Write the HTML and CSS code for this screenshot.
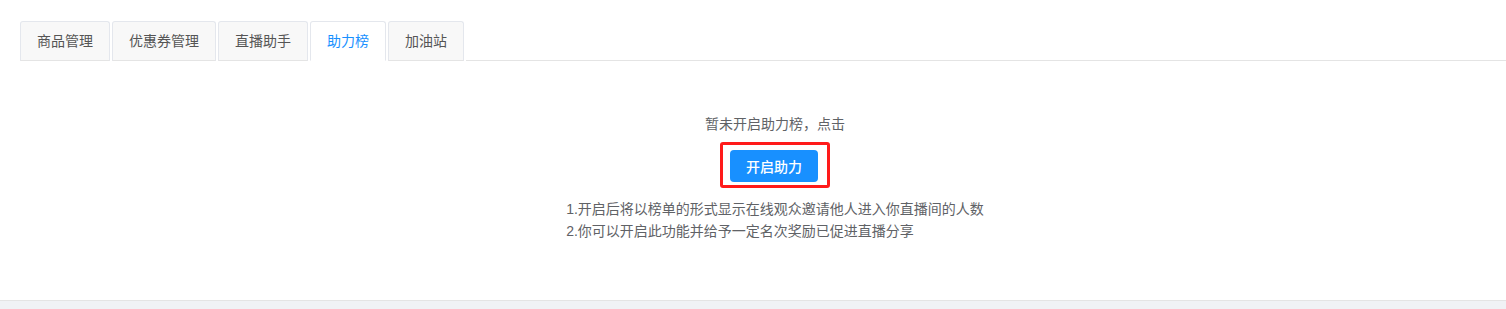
FILE: index.html
```html
<!DOCTYPE html>
<html lang="zh-CN">
<head>
<meta charset="utf-8">
<title>助力榜</title>
<link rel="stylesheet" href="styles.css">
</head>
<body>
<div class="panel">
  <div class="tabs">
    <div class="tab">商品管理</div>
    <div class="tab">优惠券管理</div>
    <div class="tab">直播助手</div>
    <div class="tab active">助力榜</div>
    <div class="tab">加油站</div>
    <div class="tab-fill"></div>
  </div>
  <div class="content">
    <p class="tip">暂未开启助力榜，点击</p>
    <div class="highlight">
      <button class="btn-primary" type="button">开启助力</button>
    </div>
    <div class="notes">
      <p>1.开启后将以榜单的形式显示在线观众邀请他人进入你直播间的人数</p>
      <p>2.你可以开启此功能并给予一定名次奖励已促进直播分享</p>
    </div>
  </div>
</div>
</body>
</html>
```

FILE: styles.css
```css
* { box-sizing: border-box; }
html, body { margin: 0; padding: 0; }
body {
  background: #f0f2f5;
  font-family: "Liberation Sans", "Noto Sans CJK SC", sans-serif;
  font-size: 14px;
  color: #606266;
}
.panel {
  background: #fff;
  height: 301px;
  border-bottom: 1px solid #e4e4e4;
  padding: 21px 0 0 20px;
}
.tabs {
  display: flex;
  align-items: flex-end;
  height: 40px;
  gap: 2px;
}
.tab {
  height: 40px;
  padding: 0 16px;
  line-height: 38px;
  border: 1px solid #e4e7ed;
  border-bottom: 1px solid #e4e4e4;
  border-radius: 3px 3px 0 0;
  background: #f8f8f8;
  color: #555;
  white-space: nowrap;
}
.tab.active {
  background: #fff;
  color: #1890ff;
  border-bottom-color: #fff;
}
.tab-fill {
  flex: 1;
  height: 40px;
  border-bottom: 1px solid #e4e4e4;
}
.content {
  display: flex;
  flex-direction: column;
  align-items: center;
  padding-left: 24px;
  padding-top: 52px;
}
.tip {
  margin: 0;
  line-height: 22px;
  color: #606266;
}
.highlight {
  margin-top: 7px;
  border: 3px solid #ff1a1a;
  border-radius: 3px;
  padding: 5px 9px 3px 7px;
}
.btn-primary {
  display: block;
  width: 88px;
  height: 32px;
  border: 0;
  border-radius: 4px;
  background: #1890ff;
  color: #fff;
  font-family: inherit;
  font-size: 14px;
  font-weight: 500;
  padding: 0;
}
.notes {
  margin-top: 10px;
}
.notes p {
  margin: 0;
  line-height: 22px;
  color: #606266;
}
```
